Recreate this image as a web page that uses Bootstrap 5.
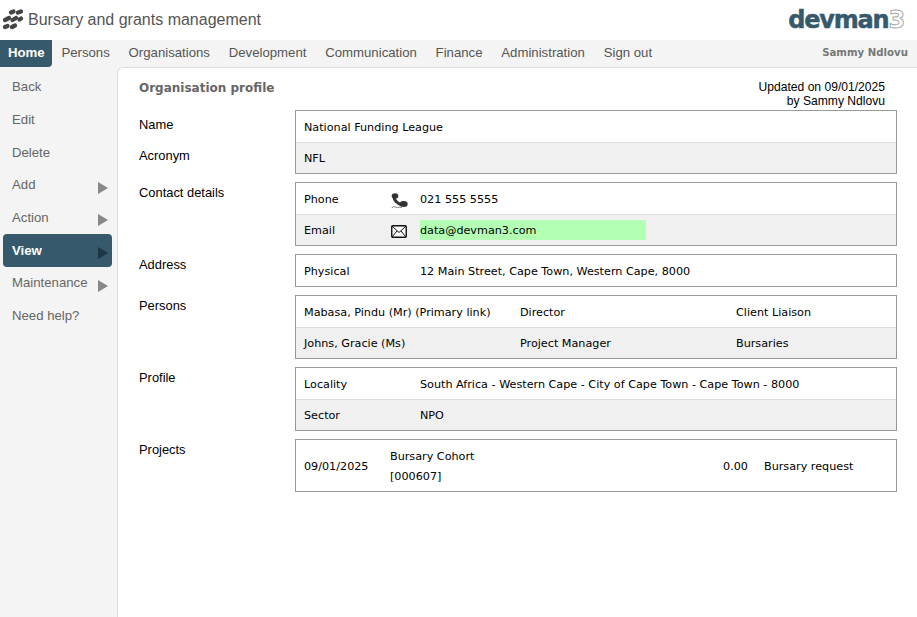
<!DOCTYPE html>
<html lang="en">
<head>
  <meta charset="utf-8">
  <title>Organisation profile</title>
  <link href="https://cdn.jsdelivr.net/npm/bootstrap@5.3.3/dist/css/bootstrap.min.css" rel="stylesheet">
  <script src="https://cdn.jsdelivr.net/npm/bootstrap@5.3.3/dist/js/bootstrap.bundle.min.js"></script>
  <style>
    body { background: #f4f4f4; font-family: "Liberation Sans", Arial, sans-serif; font-size: 13.2px; color: #000; }
    .top-head { height: 40px; background: #fff; padding: 0 13px 0 1px; }
    .app-title { font-size: 16px; color: #555; margin-left: 4px; }
    .head-logo { margin-top: -2px; }
    .logo-text { font-family: "DejaVu Sans", sans-serif; font-weight: 700; font-size: 24px; letter-spacing: -1.2px; color: #36596b; -webkit-text-stroke: .5px #36596b; }
    .logo-text span { color: #fff; -webkit-text-stroke: 1px #aaa; }
    .main-nav { height: 27px; background: #f4f4f4; }
    .main-nav a { color: #555; text-decoration: none; padding: 0 9.4px; line-height: 25px; height: 27px; }
    .main-nav a.on { background: #36596b; color: #fff; font-weight: 700; border-radius: 0 0 4px 0; padding: 0 0 0 8px; width: 52px; }
    .who { font-family: "DejaVu Sans", sans-serif; font-weight: 700; font-size: 10.2px; color: #777; padding-right: 9px; margin-top: -2px; }
    .page-wrap { min-height: 550px; }
    .side-menu { width: 117px; flex: none; padding: 3.7px 0 0 3px; }
    .side-menu a { display: flex; justify-content: space-between; align-items: center; width: 109px; height: 32.7px; padding: 0 4px 0 9px; color: #666; text-decoration: none; border-radius: 4px; }
    .side-menu a.on { background: #36596b; color: #fff; font-weight: 700; }
    .side-menu i { width: 0; height: 0; border-left: 10px solid #888; border-top: 6px solid transparent; border-bottom: 6px solid transparent; margin-top: 5px; }
    .side-menu a.on i { border-left-color: #1f3644; }
    .main-panel { flex: 1; background: #fff; border: 1px solid #ddd; border-width: 1px 0 0 1px; border-top-left-radius: 6px; padding: 10px 20px 0 21px; }
    .panel-head { height: 32px; }
    .panel-title { font-family: "DejaVu Sans", sans-serif; font-weight: 700; font-size: 12px; color: #666; margin-top: 1px; }
    .updated { font-size: 12.1px; line-height: 14px; text-align: right; padding-right: 12px; margin-top: 2px; }
    .sect { margin-bottom: 8px; }
    .sect-labels { width: 156px; flex: none; margin-top: -3px; font-size: 12.9px; }
    .sect-labels.first-labels { margin-top: 1px; }
    .sect-labels div { height: 31px; line-height: 27px; }
    .sect-box { flex: 1; border: 1px solid #999; font-family: "DejaVu Sans", Verdana, sans-serif; font-size: 11.2px; }
    .box-row { height: 31px; padding: 2px 8px 0; border-top: 1px solid #ddd; }
    .box-row:first-child { border-top: 0; padding-top: 4px; }
    .box-row:nth-child(even) { background: #f0f0f0; }
    .c86 { width: 86px; flex: none; }
    .c30 { width: 30px; flex: none; padding-left: 1px; }
    .c116 { width: 116px; flex: none; }
    .c216 { width: 216px; flex: none; }
    .mail-hl { background: #b3ffb3; width: 226px; line-height: 18px; padding-top: 2px; margin-top: -2px; }
    .proj-row { height: 51px; }
    .proj-name { line-height: 20px; width: 200px; flex: none; margin-top: -2px; }
    .proj-amt { width: 158px; text-align: right; flex: none; margin-right: 16px; }
  </style>
</head>
<body>

<div class="top-head d-flex justify-content-between align-items-center">
  <div class="d-flex align-items-center">
    <svg class="head-logo" width="23" height="23" viewBox="0 0 23 23">
      <g fill="none" stroke="#444" stroke-linecap="round" stroke-width="4.3">
        <path d="M10 4.5 12.5 3.5"/>
        <path d="M17 4.5 20 3.5"/>
        <path d="M4 12 8 10"/>
        <path d="M11.5 12 15 10"/>
        <path d="M18.5 11.5 20 10.5"/>
        <path d="M4 19 6.5 18"/>
        <path d="M11 19 14 17.5"/>
      </g>
    </svg>
    <span class="app-title">Bursary and grants management</span>
  </div>
  <div class="logo-text">devman<span>3</span></div>
</div>

<nav class="main-nav d-flex">
  <a class="on" href="#">Home</a>
  <a href="#">Persons</a>
  <a href="#">Organisations</a>
  <a href="#">Development</a>
  <a href="#">Communication</a>
  <a href="#">Finance</a>
  <a href="#">Administration</a>
  <a href="#">Sign out</a>
  <div class="who ms-auto align-self-center">Sammy Ndlovu</div>
</nav>

<div class="page-wrap d-flex">
  <div class="side-menu">
    <a href="#">Back</a>
    <a href="#">Edit</a>
    <a href="#">Delete</a>
    <a href="#">Add <i></i></a>
    <a href="#">Action <i></i></a>
    <a class="on" href="#">View <i></i></a>
    <a href="#">Maintenance <i></i></a>
    <a href="#">Need help?</a>
  </div>

  <div class="main-panel">
    <div class="panel-head d-flex justify-content-between">
      <div class="panel-title">Organisation profile</div>
      <div class="updated">Updated on 09/01/2025<br>by Sammy Ndlovu</div>
    </div>

    <div class="sect d-flex">
      <div class="sect-labels first-labels"><div>Name</div><div>Acronym</div></div>
      <div class="sect-box">
        <div class="box-row d-flex align-items-center">National Funding League</div>
        <div class="box-row d-flex align-items-center">NFL</div>
      </div>
    </div>

    <div class="sect d-flex">
      <div class="sect-labels"><div>Contact details</div></div>
      <div class="sect-box">
        <div class="box-row d-flex align-items-center">
          <div class="c86">Phone</div>
          <div class="c30">
            <svg class="d-block" width="17" height="16" viewBox="0 0 17 16">
              <ellipse cx="4" cy="3" rx="3.3" ry="2.8" fill="#333"/>
              <ellipse cx="12.7" cy="11" rx="4" ry="2.9" fill="#333"/>
              <path d="M3 4C3 7 6 10.5 11 12" fill="none" stroke="#333" stroke-width="3"/>
              <path d="M1 15C2.5 11.5 5 15.5 7 14.5 8 14 9 14 11 14.5" fill="none" stroke="#777"/>
            </svg>
          </div>
          <div>021 555 5555</div>
        </div>
        <div class="box-row d-flex align-items-center">
          <div class="c86">Email</div>
          <div class="c30">
            <svg class="d-block" width="16" height="13" viewBox="0 0 16 13"><rect x=".75" y=".75" width="14.5" height="11.5" rx="1" fill="#fff" stroke="#111" stroke-width="1.4"/><path d="M1 1 8 7.5 15 1M1 12 6 6M15 12 10 6" fill="none" stroke="#111"/></svg>
          </div>
          <div class="mail-hl">data@devman3.com</div>
        </div>
      </div>
    </div>

    <div class="sect d-flex">
      <div class="sect-labels"><div>Address</div></div>
      <div class="sect-box">
        <div class="box-row d-flex align-items-center">
          <div class="c116">Physical</div>
          <div>12 Main Street, Cape Town, Western Cape, 8000</div>
        </div>
      </div>
    </div>

    <div class="sect d-flex">
      <div class="sect-labels"><div>Persons</div></div>
      <div class="sect-box">
        <div class="box-row d-flex align-items-center">
          <div class="c216">Mabasa, Pindu (Mr) (Primary link)</div>
          <div class="c216">Director</div>
          <div>Client Liaison</div>
        </div>
        <div class="box-row d-flex align-items-center">
          <div class="c216">Johns, Gracie (Ms)</div>
          <div class="c216">Project Manager</div>
          <div>Bursaries</div>
        </div>
      </div>
    </div>

    <div class="sect d-flex">
      <div class="sect-labels"><div>Profile</div></div>
      <div class="sect-box">
        <div class="box-row d-flex align-items-center">
          <div class="c116">Locality</div>
          <div>South Africa - Western Cape - City of Cape Town - Cape Town - 8000</div>
        </div>
        <div class="box-row d-flex align-items-center">
          <div class="c116">Sector</div>
          <div>NPO</div>
        </div>
      </div>
    </div>

    <div class="sect d-flex">
      <div class="sect-labels"><div>Projects</div></div>
      <div class="sect-box">
        <div class="box-row proj-row d-flex align-items-center">
          <div class="c86">09/01/2025</div>
          <div class="proj-name">Bursary Cohort<br>[000607]</div>
          <div class="proj-amt">0.00</div>
          <div>Bursary request</div>
        </div>
      </div>
    </div>
  </div>
</div>

</body>
</html>
